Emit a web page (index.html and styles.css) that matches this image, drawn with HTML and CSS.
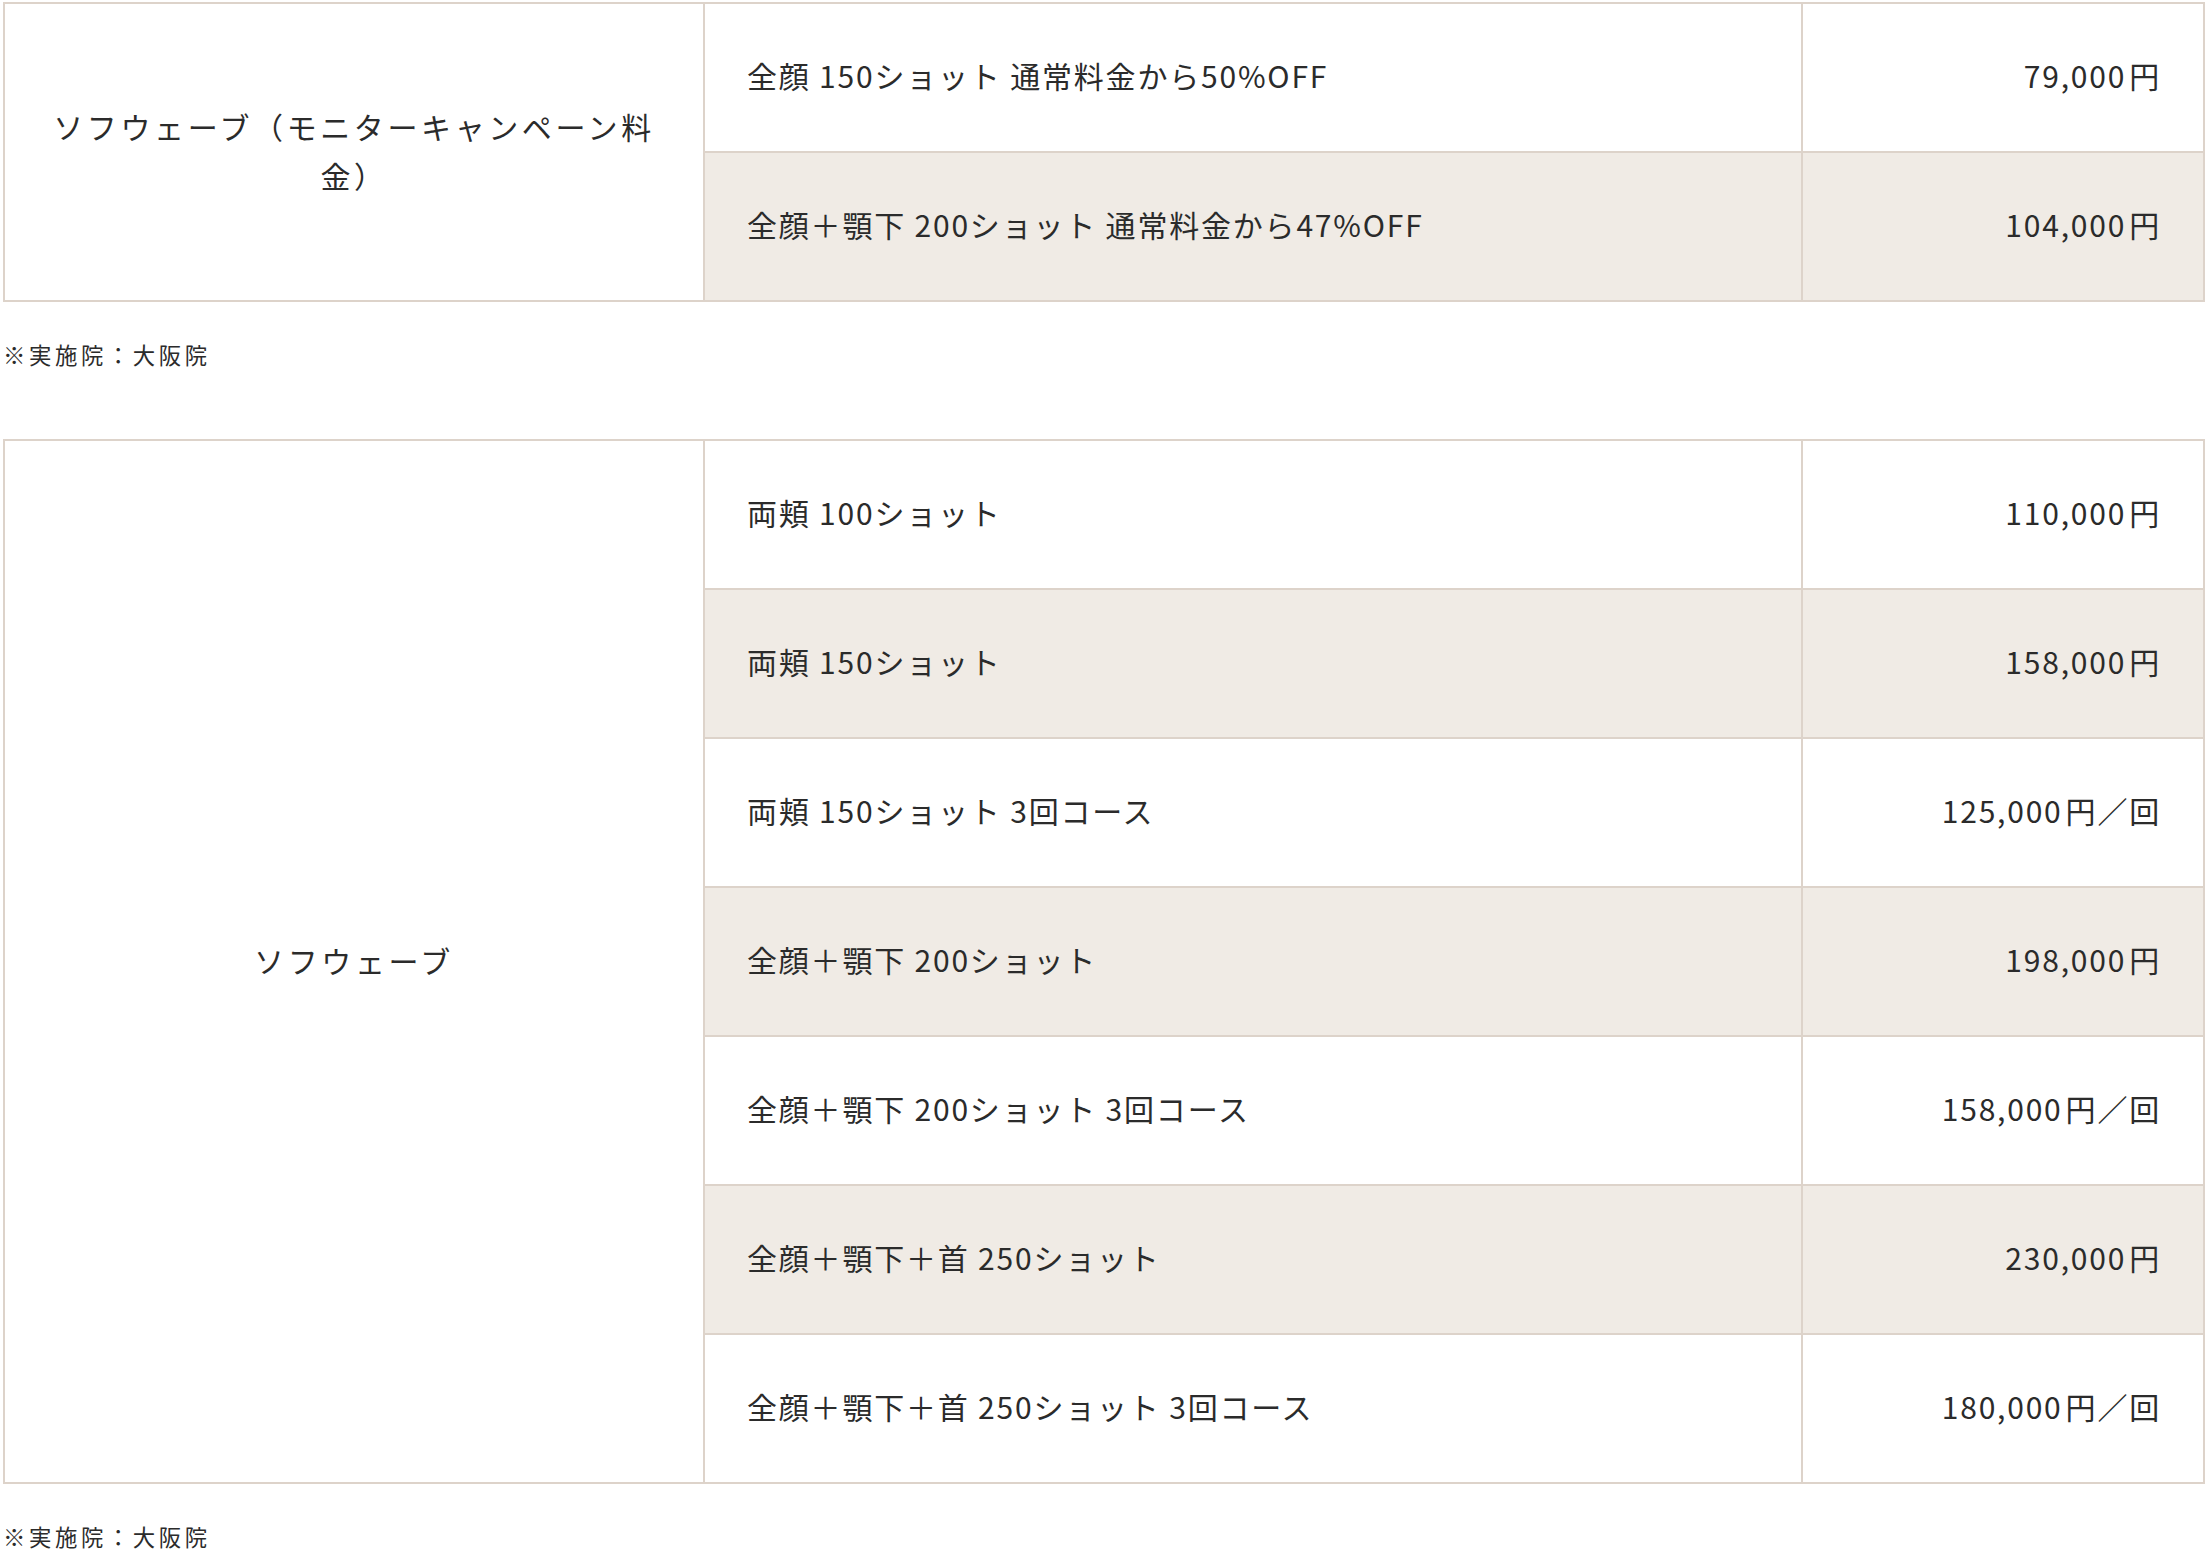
FILE: index.html
```html
<!DOCTYPE html>
<html lang="ja">
<head>
<meta charset="utf-8">
<title>ソフウェーブ 料金</title>
<link rel="stylesheet" href="styles.css">
</head>
<body>
<div class="page">
  <table class="price-table">
    <colgroup>
      <col class="col-name">
      <col class="col-menu">
      <col class="col-price">
    </colgroup>
    <tbody>
      <tr>
        <th class="name" rowspan="2">ソフウェーブ（モニターキャンペーン料金）</th>
        <td class="menu">全顔 150ショット 通常料金から50%OFF</td>
        <td class="price">79,000<span class="yen">円</span></td>
      </tr>
      <tr class="alt">
        <td class="menu">全顔＋顎下 200ショット 通常料金から47%OFF</td>
        <td class="price">104,000<span class="yen">円</span></td>
      </tr>
    </tbody>
  </table>
  <p class="note">※実施院：大阪院</p>

  <table class="price-table">
    <colgroup>
      <col class="col-name">
      <col class="col-menu">
      <col class="col-price">
    </colgroup>
    <tbody>
      <tr>
        <th class="name" rowspan="7">ソフウェーブ</th>
        <td class="menu">両頬 100ショット</td>
        <td class="price">110,000<span class="yen">円</span></td>
      </tr>
      <tr class="alt">
        <td class="menu">両頬 150ショット</td>
        <td class="price">158,000<span class="yen">円</span></td>
      </tr>
      <tr>
        <td class="menu">両頬 150ショット 3回コース</td>
        <td class="price">125,000<span class="yen">円</span>／回</td>
      </tr>
      <tr class="alt">
        <td class="menu">全顔＋顎下 200ショット</td>
        <td class="price">198,000<span class="yen">円</span></td>
      </tr>
      <tr>
        <td class="menu">全顔＋顎下 200ショット 3回コース</td>
        <td class="price">158,000<span class="yen">円</span>／回</td>
      </tr>
      <tr class="alt">
        <td class="menu">全顔＋顎下＋首 250ショット</td>
        <td class="price">230,000<span class="yen">円</span></td>
      </tr>
      <tr>
        <td class="menu">全顔＋顎下＋首 250ショット 3回コース</td>
        <td class="price">180,000<span class="yen">円</span>／回</td>
      </tr>
    </tbody>
  </table>
  <p class="note">※実施院：大阪院</p>
</div>
</body>
</html>
```

FILE: styles.css
```css
html, body {
  margin: 0;
  padding: 0;
  background: #ffffff;
}

body {
  font-family: "Noto Sans CJK JP", "Noto Sans", sans-serif;
  color: #2b2b2b;
}

.page {
  padding: 2px 2px 0 3px;
}

.price-table {
  width: 2200px;
  border-collapse: collapse;
  table-layout: fixed;
  border: 2px solid #ddd3ca;
}

.col-name { width: 700px; }
.col-menu { width: 1098px; }
.col-price { width: 402px; }

.price-table th,
.price-table td {
  border: 2px solid #ddd3ca;
  font-size: 30px;
  line-height: 49px;
  letter-spacing: 0.06em;
  font-weight: 400;
  height: 149px;
  padding: 0 42px 5px 42px;
  box-sizing: border-box;
  vertical-align: middle;
}

.price-table th.name {
  text-align: center;
  background: #ffffff;
  letter-spacing: 0.12em;
  padding: 0 28px 3px 28px;
}

.price-table td.menu {
  text-align: left;
}

.price-table td.price {
  text-align: right;
}

.yen {
  margin-left: 3px;
}

.price-table tr.alt td {
  background: #f0ebe5;
}

.note {
  margin: 34px 0 67px 0;
  font-size: 22.4px;
  line-height: 36px;
  letter-spacing: 0.16em;
}
```
